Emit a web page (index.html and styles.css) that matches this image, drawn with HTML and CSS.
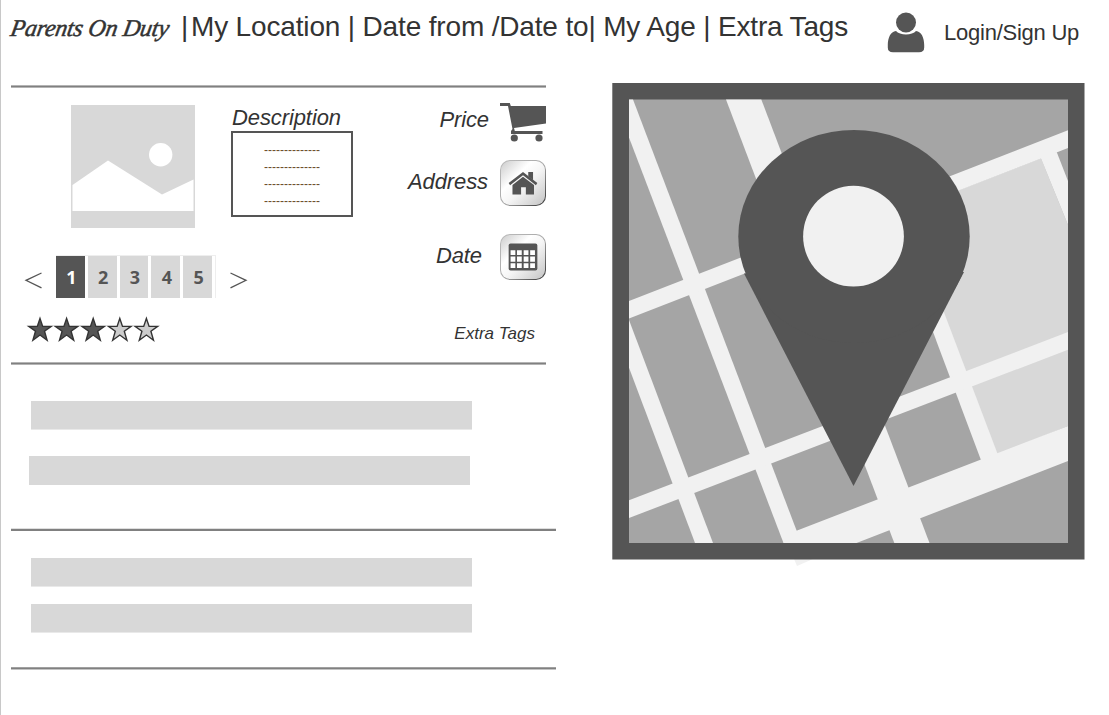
FILE: index.html
```html
<!DOCTYPE html>
<html lang="en">
<head>
<meta charset="utf-8">
<title>Parents On Duty</title>
<link rel="stylesheet" href="styles.css">
</head>
<body>
<div class="page">
  <header class="header">
    <div class="brand"><span>Parents On Duty</span></div>
    <span class="bar">|</span>
    <nav class="nav">My Location | Date from /Date to| My Age | Extra Tags</nav>
    <svg class="user" viewBox="0 0 38 41"><path d="M9 19C12.500 23.500 25.500 23.500 29 19C34.500 19.500 37.200 26 37.200 33V35.500Q37.200 40.300 32 40.300H6Q.8 40.300 .8 35.500V33C.8 26 3.500 19.500 9 19Z"/><circle cx="19" cy="11" r="11" class="halo"/><circle cx="19" cy="10.500" r="10"/></svg>
    <a class="login">Login/Sign Up</a>
  </header>
  <div class="content">
    <main class="results">
      <hr class="rule rule-soft">
      <section class="listing">
        <div class="media">
          <svg class="photo" viewBox="0 0 124 123"><path class="light" d="M0 0H124V123H0Z"/><path class="white" d="M1.500 80 37 55.500 91 89.500 122.500 74.500V106H1.500Z"/><circle class="white" cx="89.700" cy="49.800" r="11.700"/></svg>
          <div class="pager">
            <svg class="arrow" viewBox="0 0 17 17"><path d="M16.500 1 1 8.300 16.500 15.800"/></svg>
            <ol class="pages"><li class="current">1</li><li>2</li><li>3</li><li>4</li><li>5</li></ol>
            <svg class="arrow" viewBox="0 0 17 17"><path d="M.5 1 16 8.300 .5 15.800"/></svg>
          </div>
          <svg class="stars" viewBox="0 0 134 27">
            <defs><path id="star" d="M13 2.500 15.700 10.400H24.200L17.500 15.200 20.100 24.200 13 19 5.900 24.200 8.500 15.200 1.800 10.400H10.300Z"/></defs>
            <g class="on"><use href="#star"/><use href="#star" x="26.600"/><use href="#star" x="53.200"/></g>
            <g class="off"><use href="#star" x="79.800"/><use href="#star" x="106.400"/></g>
          </svg>
        </div>
        <div class="about">
          <h2 class="label">Description</h2>
          <div class="box"><p>--------------</p><p>--------------</p><p>--------------</p><p>--------------</p></div>
        </div>
        <div class="facts">
          <div class="fact price"><span class="label">Price</span>
            <svg class="cart" viewBox="0 0 46 40"><path d="M0 0H9.800L10.800 3H46V20.500L14 25 14.800 28H42.500V31H11V28L12.500 26 8 3H0Z"/><circle cx="14.300" cy="35" r="3.600"/><circle cx="39" cy="35" r="3.600"/></svg></div>
          <div class="fact address"><span class="label">Address</span>
            <span class="tile"><svg viewBox="0 0 46 46"><path d="M8 23 23 11.500 38 23 36.500 25.300 23 15 9.500 25.300Z"/><path d="M28.500 11.500H33.500V20L28.500 16ZM23 16.500 34.500 25V35H26V27.500H21V35H12V25Z"/></svg></span></div>
          <div class="fact date"><span class="label">Date</span>
            <span class="tile"><svg viewBox="0 0 46 46"><rect x="8" y="9" width="30" height="28" rx="2"/><path class="cells" d="M10 16h5v5h-5zM16.700 16h5v5h-5zM23.700 16h5v5h-5zM30.500 16h5v5h-5zM10 22.500h5v5.500h-5zM16.700 22.500h5v5.500h-5zM23.700 22.500h5v5.500h-5zM30.500 22.500h5v5.500h-5zM10 29.500h5v5h-5zM16.700 29.500h5v5h-5zM23.700 29.500h5v5h-5zM30.500 29.500h5v5h-5z"/></svg></span></div>
          <div class="tags">Extra Tags</div>
        </div>
      </section>
      <hr class="rule rule-soft">
      <section class="placeholder first"><div class="line"></div><div class="line shifted"></div></section>
      <hr class="rule rule-hard">
      <section class="placeholder second"><div class="line"></div><div class="line"></div></section>
      <hr class="rule rule-last">
    </main>
    <svg class="map" viewBox="612 83 473 484">
      <path class="road" d="M794 559 797 566 813 559Z"/>
      <path class="dark" d="M612.300 83H1084.500V559.500H612.300Z"/>
      <path class="land" d="M629 99.500H1068V543H629Z"/>
      <path class="light" d="M902 212 1041 158.300 1068 225V426L997.300 455Z"/>
      <path class="road" d="M629 99.500H633L801.300 543H783.500L629 137.500Z"/>
      <path class="road" d="M629 320 713 543H695L629 367.700Z"/>
      <path class="road" d="M726 99.500H761.300L929.500 543H894.300Z"/>
      <path class="road" d="M1040 156 1056.700 152 1068 181V225Z"/>
      <path class="road" d="M902 249H920L998 455 981.300 461Z"/>
      <path class="road" d="M629 301 1068 130.300V148L629 318.500Z"/>
      <path class="road" d="M629 500.300 1068 332V349.700L629 518Z"/>
      <path class="road" d="M796.500 530.700 1068 426V461L856.500 543H783.500L790 528Z"/>
      <path class="dark" d="M744 273.500 853.500 486 964 272Z"/>
      <ellipse class="dark" cx="854" cy="236.500" rx="115.700" ry="106.500"/>
      <circle class="road" cx="853.500" cy="236.200" r="50.400"/>
    </svg>
  </div>
</div>
</body>
</html>
```
FILE: styles.css
```css
* { box-sizing: border-box; }
body { margin: 0; background: #fff; color: #333; font-family: "Liberation Sans", Arial, sans-serif; }
.page { width: 1109px; height: 715px; border-left: 1px solid #c8c8c8; overflow: hidden; }
svg { display: block; flex: none; overflow: visible; fill: #555; }

.header { display: flex; align-items: flex-start; height: 83px; padding-left: 10px; white-space: nowrap; }
.brand { width: 170px; padding-top: 14px; font: italic 24px/28px "Brush Script MT", "Liberation Serif", cursive; letter-spacing: -.25px; -webkit-text-stroke: .5px #333; }
.brand span { display: inline-block; transform: skewX(-10deg); }
.bar, .nav { padding-top: 11px; font-size: 28px; line-height: 32px; }
.bar { width: 10px; }
.nav { width: 696px; letter-spacing: -.16px; }
.user { width: 38px; height: 41px; margin-top: 12px; }
.halo { fill: #fff; }
.login { margin-left: 19px; padding-top: 20px; font-size: 22px; line-height: 25px; letter-spacing: -.24px; }

.content { display: flex; justify-content: space-between; padding: 0 24px 0 10px; }
.results { width: 545px; padding-top: 2px; }
.map { width: 473px; height: 484px; }
.dark { fill: #555; }
.land { fill: #a5a5a5; }
.light { fill: #d8d8d8; }
.road { fill: #f1f1f1; }
.white { fill: #fff; }

.rule { width: 535px; height: 3px; margin: 0; border: 0; }
.rule-soft { background: linear-gradient(#b4b4b4 1px, #808080 1px 2px, #b4b4b4 2px); }
.rule-hard { width: 545px; background: linear-gradient(#dedede 1px, #808080 1px); }
.rule-last { width: 545px; background: linear-gradient(#a0a0a0 1px, #808080 1px 2px, #c4c4c4 2px); }

.listing { display: grid; grid-template-columns: 220px 123px 192px; width: 535px; height: 274px; }
.media { padding-top: 17px; }
.photo { width: 124px; height: 123px; margin-left: 60px; }
.pager { display: flex; align-items: flex-start; width: 223px; margin: 27px 0 0 14px; }
.arrow { width: 17px; height: 17px; margin-top: 17px; fill: none; stroke: #555; stroke-width: 1.3; }
.pages { display: flex; gap: 3px; margin: 0 14px; padding: 0 3px 0 0; list-style: none; border-top: 1px solid #eee; border-right: 1px solid #eee; }
.pages li { width: 28.800px; height: 42px; background: #d8d8d8; color: #555; font: bold 18px/43px "Open Sans", sans-serif; text-align: center; text-indent: 2px; }
.pages .current { background: #555; color: #fff; }
.stars { width: 134px; height: 27px; margin: 18px 0 0 15.500px; stroke: #333; stroke-width: 1.4; }
.off { fill: #ccc; }

.label { margin: 0; font-size: 22px; line-height: 25px; font-weight: normal; font-style: italic; letter-spacing: -.1px; }
.about { padding-top: 17px; }
.about .label { padding-left: 1px; }
.box { width: 122px; height: 86px; margin-top: 1px; padding-top: 9px; border: 2px solid #555; color: #6b4c2c; text-align: center; }
.box p { margin: 0; font-size: 12px; line-height: 17px; }
.facts { display: flex; flex-direction: column; align-items: flex-end; padding-top: 15px; }
.fact { display: flex; align-items: flex-start; }
.price { height: 57px; gap: 11px; }
.price .label { padding-top: 4px; }
.address { height: 74px; gap: 12px; }
.date { height: 74px; gap: 18px; }
.address .label, .date .label { padding-top: 9px; }
.cart { width: 46px; height: 40px; }
.tile { width: 46px; height: 46px; padding: 1px; border-radius: 10px; background: linear-gradient(135deg, #bbb, #aaa 50%, #333); }
.tile svg { width: 44px; height: 44px; border-radius: 9px; background: linear-gradient(135deg, #ccc, #fff 35%, #f5f5f5 55%, #c4c4c4); }
.cells { fill: #fff; }
.tags { padding: 16px 11px 0 0; font-size: 17px; line-height: 20px; font-style: italic; }

.placeholder { display: flex; flex-direction: column; padding-left: 20px; }
.line { width: 441px; height: 29px; background: linear-gradient(#d8d8d8 28px, #e9e9e9 28px); }
.shifted { margin-left: -2px; background: #d8d8d8; }
.first { height: 163px; padding-top: 36px; gap: 26px; }
.second { height: 136px; padding-top: 27px; gap: 17px; }
```
